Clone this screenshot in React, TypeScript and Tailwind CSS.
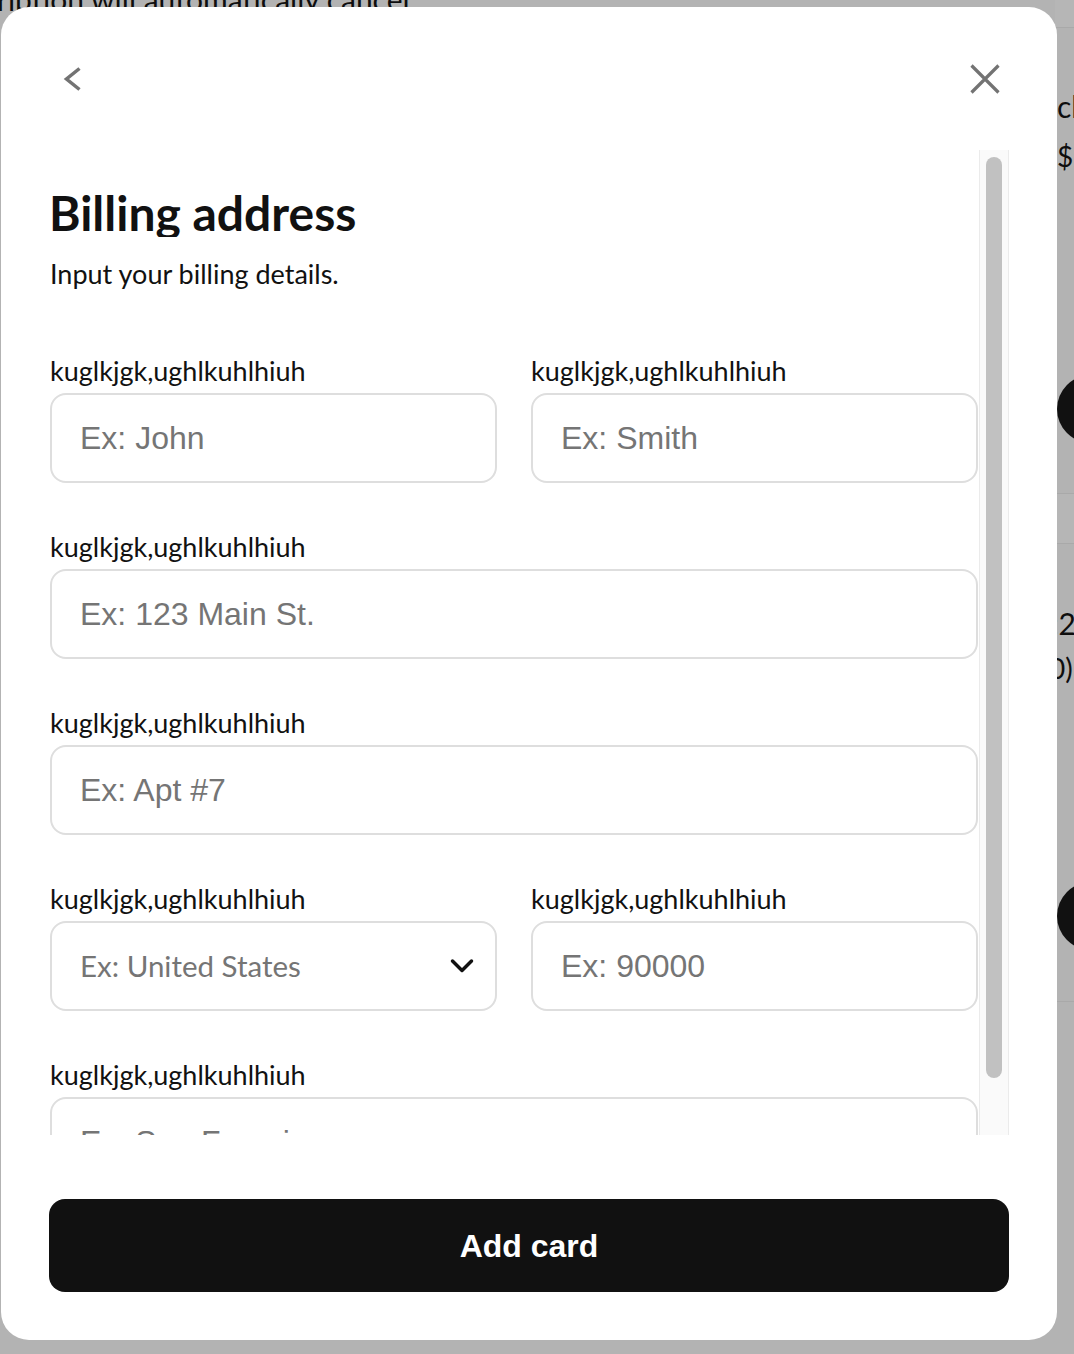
import React from "react";

const sans = "font-['Lato','Noto_Sans',sans-serif]";
const arial = "font-['Liberation_Sans',Arial,sans-serif]";

function Label({ children }: { children: React.ReactNode }) {
  return (
    <label className={`${sans} mb-[4px] block text-[27px] leading-[36px] text-[#111111]`}>
      {children}
    </label>
  );
}

function TextField({ label, placeholder }: { label: string; placeholder: string }) {
  return (
    <div className="flex min-w-0 flex-col">
      <Label>{label}</Label>
      <input
        placeholder={placeholder}
        className={`${arial} h-[90px] w-full rounded-[16px] border-2 border-[#dedede] bg-white pl-[28px] text-[32px] text-[#111111] outline-none placeholder:text-[#757575]`}
      />
    </div>
  );
}

function SelectField({ label, placeholder }: { label: string; placeholder: string }) {
  return (
    <div className="flex min-w-0 flex-col">
      <Label>{label}</Label>
      <button
        type="button"
        className="flex h-[90px] w-full items-center justify-between rounded-[16px] border-2 border-[#dedede] bg-white pl-[28px] pr-[21px]"
      >
        <span className={`${sans} text-[29.5px] text-[#757575]`}>{placeholder}</span>
        <svg width="24" height="16" viewBox="0 0 24 16" fill="none">
          <polyline points="2.5,3 12,12.5 21.5,3" stroke="#111111" strokeWidth="3.5" strokeLinecap="round" strokeLinejoin="round" />
        </svg>
      </button>
    </div>
  );
}

const LABEL = "kuglkjgk,ughlkuhlhiuh";

export default function App() {
  return (
    <div className={`${sans} relative h-[1354px] w-full overflow-hidden bg-[#b3b3b3]`}>
      {/* page behind the overlay */}
      <div className="flex h-full">
        <div className="min-w-0 flex-1">
          <p className="-mt-[19px] -ml-[3px] whitespace-nowrap text-[30px] leading-[36px] text-[#0e0e0e]">
            ription will automatically cancel
          </p>
        </div>
        <div className="flex w-[19px] flex-none flex-col">
          <div className="h-[28px] border-b border-[#a9a9a9] bg-[#b6b6b6]" />
          <p className="mt-[60px] ml-[2px] whitespace-nowrap text-[30px] leading-[36px] text-[#0e0e0e]">click</p>
          <p className="mt-[14px] ml-[2px] whitespace-nowrap text-[28px] leading-[36px] text-[#0e0e0e]">$29</p>
          <div className="mt-[201px] ml-[2px] h-[68px] w-[68px] flex-none rounded-full bg-[#111111]" />
          <div className="mt-[50px] h-[51px] flex-none border-y border-[#a9a9a9] bg-[#b6b6b6]" />
          <p className="mt-[61px] -ml-[4px] whitespace-nowrap text-[30px] leading-[36px] text-[#0e0e0e]">:29</p>
          <p className="mt-[9px] -ml-[6px] whitespace-nowrap text-[28px] leading-[36px] text-[#0e0e0e]">0)</p>
          <div className="mt-[196px] ml-[2px] h-[68px] w-[68px] flex-none rounded-full bg-[#111111]" />
          <div className="mt-[51px] flex-none border-t border-[#a9a9a9]" />
        </div>
      </div>

      {/* modal */}
      <div className="absolute left-[1px] top-[7px] flex h-[1333px] w-[1056px] flex-col rounded-[28px] bg-white px-[48px] pb-[48px]">
        <div className="flex-none pt-[44px] pb-[43px]">
          <div className="flex h-[56px] items-center justify-between">
            <button type="button" className="ml-[11px] flex h-[24px] w-[24px] items-center justify-center">
              <svg width="24" height="24" viewBox="0 0 24 24" fill="none">
                <polyline points="19.5,1.5 6.5,12 19.5,22.5" stroke="#737373" strokeWidth="3.5" strokeLinejoin="miter" />
              </svg>
            </button>
            <button type="button" className="mr-[8px] flex h-[32px] w-[32px] items-center justify-center">
              <svg width="32" height="32" viewBox="0 0 32 32" fill="none">
                <path d="M2.5 2.5 L29.5 29.5 M29.5 2.5 L2.5 29.5" stroke="#737373" strokeWidth="3.2" />
              </svg>
            </button>
          </div>
        </div>

        <div className="flex h-[985px] flex-none">
          <div className="min-w-0 flex-1 overflow-hidden px-[1px] pt-[39px]">
            <h2 className="-ml-[1px] h-[48px] overflow-hidden text-[48px] font-bold leading-none text-[#111111]">
              Billing address
            </h2>
            <p className="mt-[19px] text-[27px] leading-[36px] text-[#111111]">Input your billing details.</p>

            <div className="mt-[61px] flex flex-col gap-[46px]">
              <div className="grid grid-cols-2 gap-x-[34px]">
                <TextField label={LABEL} placeholder="Ex: John" />
                <TextField label={LABEL} placeholder="Ex: Smith" />
              </div>
              <TextField label={LABEL} placeholder="Ex: 123 Main St." />
              <TextField label={LABEL} placeholder="Ex: Apt #7" />
              <div className="grid grid-cols-2 gap-x-[34px]">
                <SelectField label={LABEL} placeholder="Ex: United States" />
                <TextField label={LABEL} placeholder="Ex: 90000" />
              </div>
              <TextField label={LABEL} placeholder="Ex: San Francisco" />
            </div>
          </div>

          <div className="w-[30px] flex-none border-x border-[#ebebeb] bg-[#fafafa] pt-[7px]">
            <div className="mx-auto h-[921px] w-[16px] rounded-full bg-[#c1c1c1]" />
          </div>
        </div>

        <button
          type="button"
          className={`${arial} mt-[64px] h-[93px] w-full flex-none rounded-[16px] bg-[#111111] text-[32px] font-bold text-white`}
        >
          Add card
        </button>
      </div>
    </div>
  );
}
